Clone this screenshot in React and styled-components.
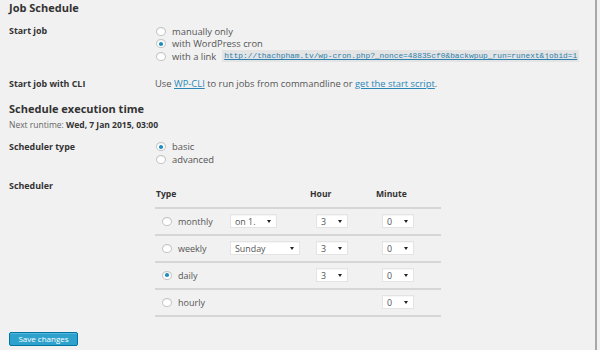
import React from 'react';
import styled, { createGlobalStyle } from 'styled-components';

const GlobalStyle = createGlobalStyle`
  html, body {
    margin: 0;
    padding: 0;
    background: #f1f1f1;
  }
  body {
    font-family: "Open Sans", "Liberation Sans", sans-serif;
    color: #555;
    font-size: 9px;
  }
`;

const startOptions = [
  { label: 'manually only', checked: false },
  { label: 'with WordPress cron', checked: true },
  { label: 'with a link', checked: false, link: 'http://thachpham.tv/wp-cron.php?_nonce=48835cf0&backwpup_run=runext&jobid=1' },
];

const rows = [
  { type: 'monthly', day: 'on 1.', dayWidth: 47, hour: '3', minute: '0' },
  { type: 'weekly', day: 'Sunday', dayWidth: 70, hour: '3', minute: '0' },
  { type: 'daily', checked: true, hour: '3', minute: '0' },
  { type: 'hourly', minute: '0' },
];

const Radio = ({ checked }) => (
  <RadioCircle>{checked && <RadioDot />}</RadioCircle>
);

const Select = ({ value, width }) => (
  <SelectBox style={{ width }}>
    <span>{value}</span>
    <Arrow />
  </SelectBox>
);

const App = () => {
  return (
    <Page>
      <GlobalStyle />
      <Heading>Job Schedule</Heading>

      <FormRow top={11}>
        <Label>Start job</Label>
        <Options>
          {startOptions.map((opt) => (
            <Option key={opt.label}>
              <Radio checked={opt.checked} />
              <span>{opt.label}</span>
              {opt.link && <Code>{opt.link}</Code>}
            </Option>
          ))}
        </Options>
      </FormRow>

      <FormRow top={15.5}>
        <Label>Start job with CLI</Label>
        <Text>
          Use <Link>WP-CLI</Link> to run jobs from commandline or <Link>get the start script</Link>.
        </Text>
      </FormRow>

      <Heading top={11.5}>Schedule execution time</Heading>
      <Runtime>Next runtime: <b>Wed, 7 Jan 2015, 03:00</b></Runtime>

      <FormRow top={10.5}>
        <Label>Scheduler type</Label>
        <Options>
          <Option>
            <Radio checked />
            <span>basic</span>
          </Option>
          <Option>
            <Radio />
            <span>advanced</span>
          </Option>
        </Options>
      </FormRow>

      <FormRow top={14}>
        <Label>Scheduler</Label>
        <Table>
          <HeadRow>
            <HeadCell>Type</HeadCell>
            <HeadCell>Hour</HeadCell>
            <HeadCell>Minute</HeadCell>
          </HeadRow>
          {rows.map((row) => (
            <BodyRow key={row.type}>
              <Cell>
                <Radio checked={row.checked} />
                <TypeLabel>{row.type}</TypeLabel>
                {row.day && <Select value={row.day} width={row.dayWidth} />}
              </Cell>
              <Cell>{row.hour && <Select value={row.hour} width={32} />}</Cell>
              <Cell>{row.minute && <Select value={row.minute} width={32} />}</Cell>
            </BodyRow>
          ))}
        </Table>
      </FormRow>

      <SaveButton>Save changes</SaveButton>
    </Page>
  );
};

export default App;

const Page = styled.div`
  width: 597px;
  height: 350px;
  box-sizing: border-box;
  border-right: 2px solid #a8a8a8;
  padding: 0 0 0 9px;
  overflow: hidden;
`;

const Heading = styled.h2`
  margin: 0;
  padding-top: ${(p) => p.top || 1}px;
  font-size: 11px;
  line-height: 13px;
  font-weight: 700;
  color: #333;
`;

const FormRow = styled.div`
  display: grid;
  grid-template-columns: 146px 1fr;
  margin-top: ${(p) => p.top}px;
`;

const Label = styled.div`
  font-weight: 700;
  font-size: 8.9px;
  line-height: 12.5px;
  color: #333;
`;

const Options = styled.div`
  display: flex;
  flex-direction: column;
`;

const Option = styled.div`
  display: flex;
  align-items: center;
  height: 12.5px;
  font-size: 9.4px;
  color: #555;
  gap: 6px;
  padding-left: 1px;
`;

const RadioCircle = styled.span`
  display: inline-flex;
  align-items: center;
  justify-content: center;
  width: 10px;
  height: 9px;
  box-sizing: border-box;
  border: 1px solid #c4c4c4;
  border-radius: 50%;
  background: #fff;
  box-shadow: inset 0 1px 1px rgba(0, 0, 0, 0.06);
  flex-shrink: 0;
`;

const RadioDot = styled.span`
  width: 4px;
  height: 3.5px;
  border-radius: 50%;
  background: #1e8cbe;
`;

const Code = styled.code`
  padding: 1px 2px;
  background: #e4e4e4;
  color: #2a7fae;
  text-decoration: underline;
  font-family: "Liberation Mono", "DejaVu Sans Mono", monospace;
  font-size: 7.85px;
  line-height: 10px;
  white-space: nowrap;
`;

const Text = styled.div`
  font-size: 9.4px;
  line-height: 12.5px;
  color: #555;
  white-space: nowrap;
`;

const Link = styled.a`
  color: #2a87b8;
  text-decoration: underline;
`;

const Runtime = styled.div`
  margin-top: 5px;
  font-size: 8.5px;
  line-height: 10px;
  color: #666;
  white-space: nowrap;
  b {
    color: #333;
  }
`;

const Table = styled.div`
  width: 286px;
  margin-top: 6px;
`;

const HeadRow = styled.div`
  display: grid;
  grid-template-columns: 154px 66px 66px;
  height: 21px;
  align-items: center;
  border-bottom: 2px solid #d6d6d6;
`;

const HeadCell = styled.div`
  font-weight: 700;
  font-size: 8.6px;
  color: #333;
  padding: 0 0 5px 1px;
`;

const BodyRow = styled.div`
  display: grid;
  grid-template-columns: 154px 66px 66px;
  height: 25px;
  align-items: center;
  border-bottom: 2px solid #d6d6d6;
`;

const Cell = styled.div`
  display: flex;
  align-items: center;
  padding-left: 7px;
`;

const TypeLabel = styled.span`
  margin-left: 6px;
  width: 52px;
  font-size: 9px;
  color: #555;
`;

const SelectBox = styled.div`
  display: flex;
  align-items: center;
  justify-content: space-between;
  box-sizing: border-box;
  height: 14px;
  padding: 0 5px 0 4px;
  background: #fff;
  border: 1px solid #e4e4e4;
  box-shadow: inset 0 1px 1px rgba(0, 0, 0, 0.04);
  font-size: 8.9px;
  color: #555;
`;

const Arrow = styled.span`
  width: 0;
  height: 0;
  border-left: 2.5px solid transparent;
  border-right: 2.5px solid transparent;
  border-top: 3px solid #222;
`;

const SaveButton = styled.button`
  display: block;
  margin-top: 15px;
  width: 69px;
  height: 14px;
  padding: 0;
  background: #2ea2cc;
  border: 1px solid #0074a2;
  border-radius: 2px;
  box-shadow: inset 0 1px 0 rgba(120, 200, 230, 0.5);
  color: #fff;
  font-family: "Open Sans", "Liberation Sans", sans-serif;
  font-size: 8px;
  line-height: 12px;
`;
